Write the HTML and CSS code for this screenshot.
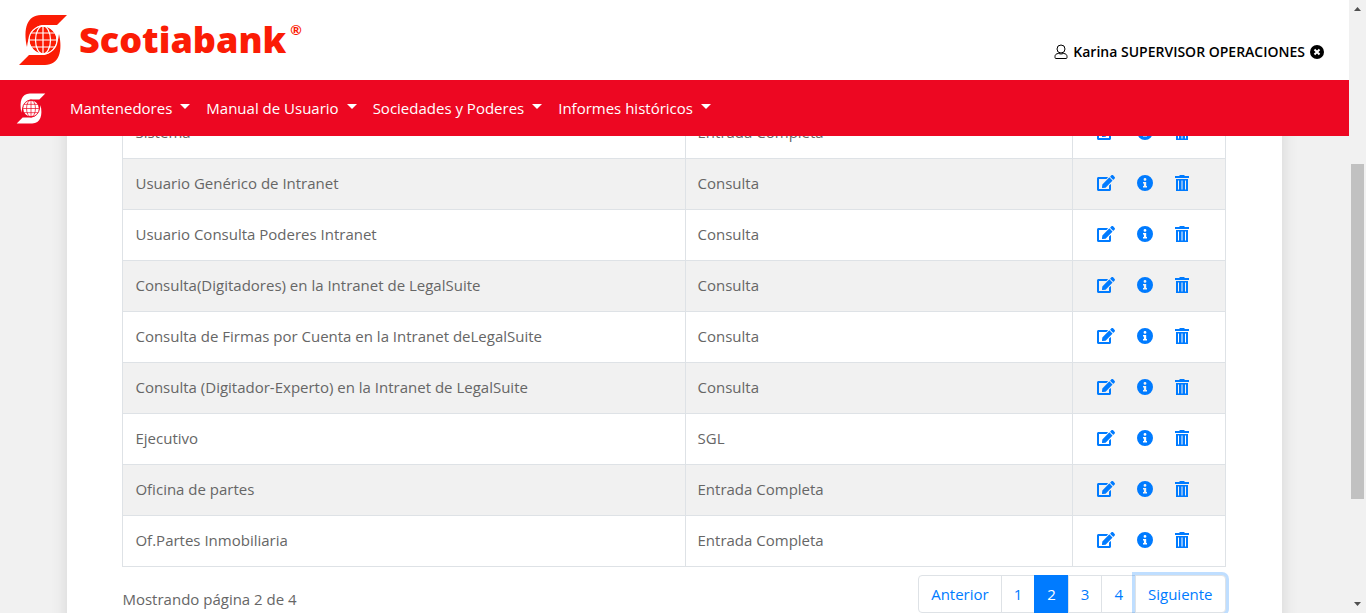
FILE: index.html
```html
<!DOCTYPE html>
<html lang="es">
<head>
<meta charset="utf-8">
<title>Scotiabank - Perfiles</title>
<link rel="stylesheet" href="styles.css">
</head>
<body>
<svg class="sprite" aria-hidden="true">
  <symbol id="brand-mark" viewBox="0 0 48 52">
    <path fill="currentColor" d="M8 33C4 15 8 1 22 1H48L38 11H23C15 12 9 22 8 33ZM40 20C44 37 40 51 26 51H0L10 41H25C33 40 39 31 40 20Z"/>
    <circle cx="24" cy="26" r="13.500" fill="currentColor"/>
    <g class="mark-grid">
      <circle cx="24" cy="26" r="14"/>
      <ellipse cx="24" cy="26" rx="7.500" ry="14"/>
      <path d="M24 12V40M10 26H38M12 19H36M12 33H36"/>
    </g>
  </symbol>
  <symbol id="edit" viewBox="0 0 576 512"><path fill="currentColor" d="M402.600 83.200l90.200 90.200c3.800 3.800 3.800 10 0 13.800L274.400 405.600l-92.800 10.300c-12.400 1.400-22.900-9.100-21.500-21.500l10.300-92.800L388.800 83.200c3.800-3.800 10-3.800 13.800 0zm162-22.900l-48.800-48.800c-15.200-15.200-39.900-15.200-55.200 0l-35.400 35.400c-3.800 3.800-3.800 10 0 13.800l90.200 90.200c3.800 3.800 10 3.800 13.800 0l35.400-35.400c15.200-15.300 15.200-40 0-55.200zM384 346.200V448H64V128h229.800c3.200 0 6.200-1.300 8.500-3.500l40-40c7.600-7.600 2.200-20.500-8.500-20.500H48C21.500 64 0 85.500 0 112v352c0 26.500 21.500 48 48 48h352c26.500 0 48-21.500 48-48V306.200c0-10.700-12.900-16-20.500-8.500l-40 40c-2.200 2.300-3.500 5.300-3.500 8.500z"/></symbol>
  <symbol id="info" viewBox="0 0 16 16"><path fill="currentColor" fill-rule="evenodd" d="M8 0a8 8 0 1 0 0 16A8 8 0 0 0 8 0ZM8 3a1.400 1.400 0 1 1 0 2.800A1.400 1.400 0 0 1 8 3ZM6 7H9.200V11H10V12.500H6V11H6.900V8.400H6Z"/></symbol>
  <symbol id="trash" viewBox="0 0 14 16"><path fill="currentColor" fill-rule="evenodd" d="M0 1H4L5 0H9L10 1H14V3H0ZM1 4H13V16H1ZM3 5.500V14.500H4V5.500ZM6.500 5.500V14.500H7.500V5.500ZM10 5.500V14.500H11V5.500Z"/></symbol>
  <symbol id="user" viewBox="0 0 14 16"><g fill="none" stroke="currentColor"><circle cx="7" cy="5" r="4"/><path d="M4.500 9.500C2 9.500 1 11 1 12.500V13.500Q1 14.500 2 14.500H12Q13 14.500 13 13.500V12.500C13 11 12 9.500 9.500 9.500Q7 10.500 4.500 9.500Z"/></g></symbol>
  <symbol id="close" viewBox="0 0 14 14"><circle cx="7" cy="7" r="7" fill="currentColor"/><path d="M4.500 4.500L9.500 9.500M9.500 4.500L4.500 9.500" stroke="#fff" stroke-width="2"/></symbol>
</svg>

<div class="window">
  <div class="page">
    <header class="header">
      <a class="brand" href="#"><svg class="brand-mark"><use href="#brand-mark"/></svg><span class="brand-name">Scotiabank</span><span class="brand-reg">®</span></a>
      <div class="user"><svg class="user-icon"><use href="#user"/></svg><span>Karina SUPERVISOR OPERACIONES</span><button class="logout" aria-label="Cerrar sesión"><svg><use href="#close"/></svg></button></div>
    </header>
    <nav class="navbar">
      <a class="nav-brand" href="#" aria-label="Inicio"><svg><use href="#brand-mark"/></svg></a>
      <button class="nav-link">Mantenedores</button>
      <button class="nav-link">Manual de Usuario</button>
      <button class="nav-link">Sociedades y Poderes</button>
      <button class="nav-link">Informes históricos</button>
    </nav>
    <main class="content">
      <section class="card">
        <table class="profiles">
          <colgroup><col class="col-name"><col><col class="col-actions"></colgroup>
          <tbody id="rows"></tbody>
        </table>
        <div class="table-footer">
          <p class="summary">Mostrando página 2 de 4</p>
          <div class="pagination">
            <a class="page-link" href="#">Anterior</a>
            <a class="page-link" href="#">1</a>
            <a class="page-link active" href="#" aria-current="page">2</a>
            <a class="page-link" href="#">3</a>
            <a class="page-link" href="#">4</a>
            <a class="page-link focused" href="#">Siguiente</a>
          </div>
        </div>
      </section>
    </main>
  </div>
  <div class="scrollbar" aria-hidden="true">
    <svg class="arrow" viewBox="0 0 7 4"><path d="M0 4L3.500 0L7 4Z"/></svg>
    <div class="track"><div class="thumb"></div></div>
    <svg class="arrow" viewBox="0 0 7 4"><path d="M0 0H7L3.500 4Z"/></svg>
  </div>
</div>
<script src="rows.js"></script>
</body>
</html>
```

FILE: styles.css
```css
* { box-sizing: border-box; }

body {
  margin: 0;
  font: 15px/24px "Open Sans", "Trebuchet MS", sans-serif;
  color: #666;
  background: #f1f1f1;
}

button { font: inherit; color: inherit; background: none; border: 0; padding: 0; }
a { text-decoration: none; color: inherit; }
svg { display: block; }
.sprite { display: none; }

.window { display: flex; height: 100vh; overflow: hidden; }
.page { flex: 1; min-width: 0; display: flex; flex-direction: column; }

.header {
  --grid: #fff;
  flex: none;
  height: 80px;
  display: flex;
  align-items: center;
  justify-content: space-between;
  padding: 0 25px 0 19px;
  background: #fff;
}
.brand { display: flex; align-items: center; color: #fb1c05; }
.brand-mark { width: 48px; height: 52px; margin-right: 12px; }
.brand-name { font: 800 36px/48px "Open Sans", sans-serif; }
.brand-reg { font: 700 14px/16px Lato, sans-serif; align-self: flex-start; margin: 8px 0 0 4px; }
.mark-grid { fill: none; stroke: var(--grid); stroke-width: 1.2px; }

.user { display: flex; align-items: center; gap: 5px; padding-top: 23px; color: #000; font-size: 14px; font-weight: 600; }
.user-icon { width: 14px; height: 16px; }
.logout svg { width: 14px; height: 14px; }

.navbar {
  --grid: #ed0722;
  flex: none;
  z-index: 1;
  height: 56px;
  display: flex;
  align-items: center;
  padding: 0 16px;
  background: #ed0722;
  color: #fff;
}
.nav-brand { margin-right: 16px; }
.nav-brand svg { width: 30px; height: 31px; }
.nav-link { display: flex; align-items: center; gap: 8px; padding: 8px; }
.nav-link::after { content: ""; border: 5px solid transparent; border-top-color: #fff; border-bottom: 0; margin-top: -3px; }

.content { flex: 1; min-height: 0; }
.card {
  width: 90%;
  margin: -29px auto 0;
  padding: 0 56px 24px 55px;
  background: #fff;
  box-shadow: 0 0 16px rgba(0, 0, 0, .12);
}

.profiles { width: 100%; table-layout: fixed; border-collapse: collapse; }
.col-name { width: 51%; }
.col-actions { width: 153px; }
.profiles td { height: 51px; padding: 0 12px 2px; border: 1px solid #dee2e6; }
.profiles tr:nth-child(even) { background: #f1f1f1; }
.actions { display: flex; align-items: center; gap: 22px; padding-left: 12px; color: #007bff; }
.icon-edit { width: 18px; height: 16px; }
.icon-info { width: 16px; height: 16px; }
.icon-trash { width: 14px; height: 16px; }

.table-footer { display: flex; justify-content: space-between; padding-top: 8px; }
.summary { margin: 12px 0 0; }
.pagination { display: flex; color: #007bff; }
.page-link { height: 38px; padding: 6px 12px; border: 1px solid #dee2e6; margin-left: -1px; background: #fff; }
.page-link:first-child { border-radius: 4px 0 0 4px; }
.active { background: #007bff; border-color: #007bff; color: #fff; }
.focused { border-radius: 0 4px 4px 0; box-shadow: 0 0 0 3px rgba(0, 123, 255, .25); }

.scrollbar { flex: none; z-index: 2; width: 17px; display: flex; flex-direction: column; align-items: center; padding: 7px 0; background: #f1f1f1; }
.arrow { width: 7px; height: 4px; fill: #505050; }
.track { flex: 1; width: 13px; display: flex; flex-direction: column; }
.track::before { content: ""; flex: 153; }
.track::after { content: ""; flex: 103; }
.thumb { flex: 335; background: #c1c1c1; }
```

FILE: rows.js
```js
const profiles = [
  ["Sistema", "Entrada Completa"],
  ["Usuario Genérico de Intranet", "Consulta"],
  ["Usuario Consulta Poderes Intranet", "Consulta"],
  ["Consulta(Digitadores) en la Intranet de LegalSuite", "Consulta"],
  ["Consulta de Firmas por Cuenta en la Intranet deLegalSuite", "Consulta"],
  ["Consulta (Digitador-Experto) en la Intranet de LegalSuite", "Consulta"],
  ["Ejecutivo", "SGL"],
  ["Oficina de partes", "Entrada Completa"],
  ["Of.Partes Inmobiliaria", "Entrada Completa"]
];
const action = (icon, label) =>
  `<button aria-label="${label}"><svg class="icon-${icon}"><use href="#${icon}"/></svg></button>`;
document.getElementById("rows").innerHTML = profiles.map(([name, type]) =>
  `<tr><td>${name}</td><td>${type}</td><td><div class="actions">${action("edit", "Editar")}${action("info", "Información")}${action("trash", "Eliminar")}</div></td></tr>`
).join("");
```
